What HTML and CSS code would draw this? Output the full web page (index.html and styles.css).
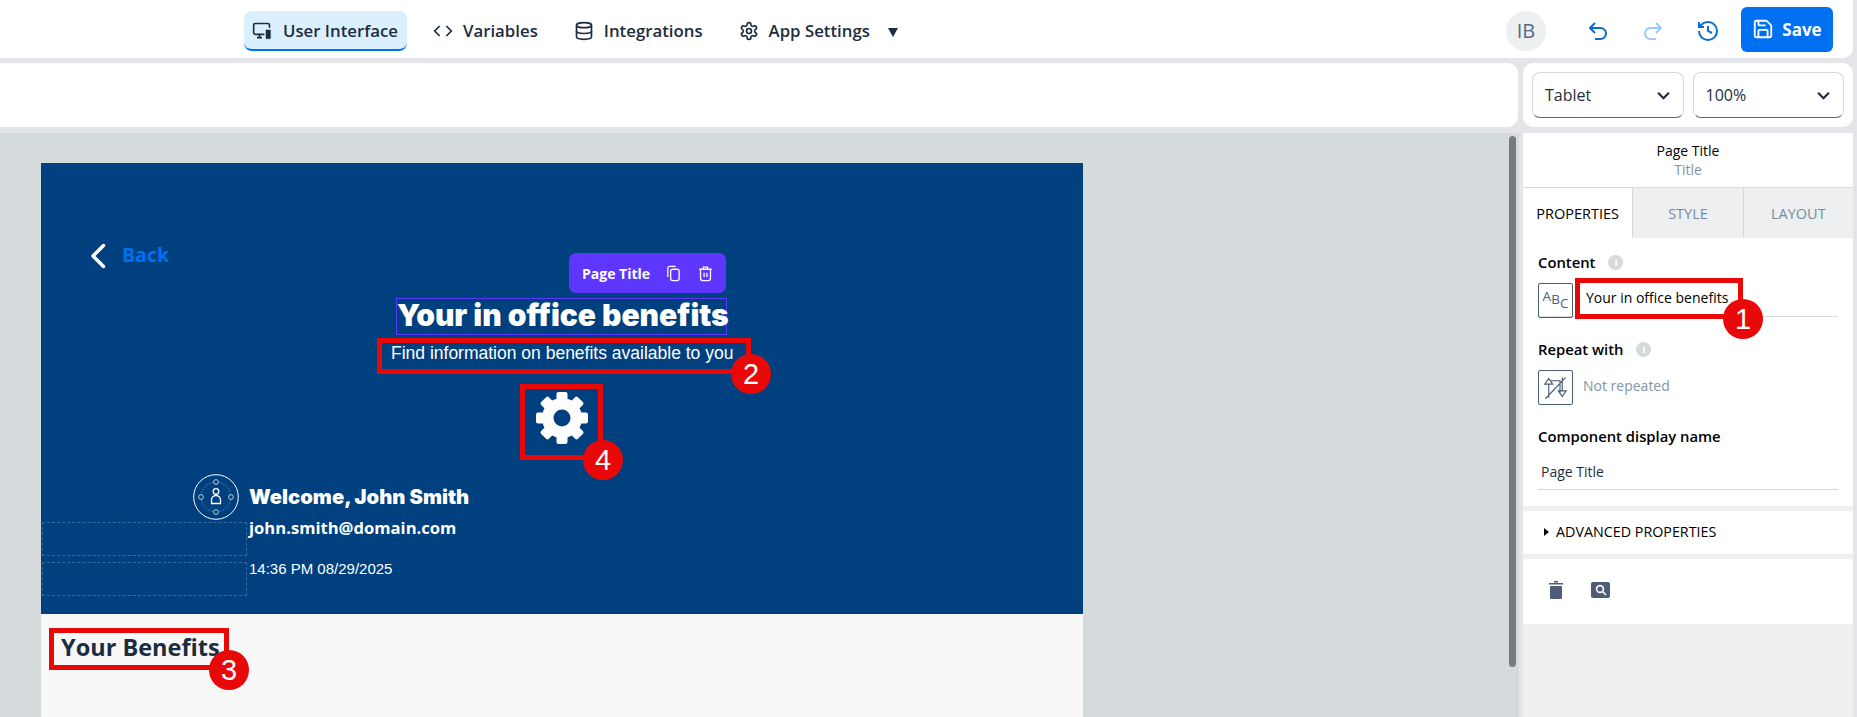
FILE: index.html
```html
<!DOCTYPE html>
<html lang="en">
<head>
  <meta charset="UTF-8">
  <title>User Interface</title>
  <link rel="stylesheet" href="styles.css">
</head>
<body>
  <header class="topbar">
    <nav class="nav">
      <a class="nav-item active">
        <svg class="nav-icon" viewBox="0 0 24 24"><path d="M15 16H4a2 2 0 0 1-2-2V5a2 2 0 0 1 2-2h15a2 2 0 0 1 2 2v3"/><path d="M9 16v4M6 20h6"/><rect class="solid" x="16" y="10" width="7" height="12" rx="1.5"/></svg>
        User Interface
      </a>
      <a class="nav-item">
        <svg class="nav-icon" viewBox="0 0 24 24"><path d="M8 6l-6 6 6 6M16 6l6 6-6 6"/></svg>
        Variables
      </a>
      <a class="nav-item">
        <svg class="nav-icon" viewBox="0 0 24 24"><ellipse cx="12" cy="5" rx="9" ry="3"/><path d="M3 5v14c0 1.7 4 3 9 3s9-1.3 9-3V5"/><path d="M3 12c0 1.7 4 3 9 3s9-1.3 9-3"/></svg>
        Integrations
      </a>
      <a class="nav-item">
        <svg class="nav-icon" viewBox="0 0 24 24"><path d="M12.22 2h-.44a2 2 0 0 0-2 2v.18a2 2 0 0 1-1 1.73l-.43.25a2 2 0 0 1-2 0l-.15-.08a2 2 0 0 0-2.73.73l-.22.38a2 2 0 0 0 .73 2.73l.15.1a2 2 0 0 1 1 1.72v.51a2 2 0 0 1-1 1.74l-.15.09a2 2 0 0 0-.73 2.73l.22.38a2 2 0 0 0 2.73.73l.15-.08a2 2 0 0 1 2 0l.43.25a2 2 0 0 1 1 1.73V20a2 2 0 0 0 2 2h.44a2 2 0 0 0 2-2v-.18a2 2 0 0 1 1-1.73l.43-.25a2 2 0 0 1 2 0l.15.08a2 2 0 0 0 2.73-.73l.22-.39a2 2 0 0 0-.73-2.73l-.15-.08a2 2 0 0 1-1-1.74v-.5a2 2 0 0 1 1-1.74l.15-.09a2 2 0 0 0 .73-2.73l-.22-.38a2 2 0 0 0-2.73-.73l-.15.08a2 2 0 0 1-2 0l-.43-.25a2 2 0 0 1-1-1.73V4a2 2 0 0 0-2-2z"/><circle cx="12" cy="12" r="3"/></svg>
        App Settings
        <span class="nav-caret"></span>
      </a>
    </nav>
    <div class="top-actions">
      <span class="avatar">IB</span>
      <svg class="action-icon" viewBox="0 0 24 24"><path d="M9 14 4 9l5-5"/><path d="M4 9h10.5a5.5 5.5 0 0 1 0 11H9"/></svg>
      <svg class="action-icon off" viewBox="0 0 24 24"><path d="M15 14l5-5-5-5"/><path d="M20 9H9.5a5.5 5.5 0 0 0 0 11H15"/></svg>
      <svg class="action-icon" viewBox="0 0 24 24"><path d="M3 12a9 9 0 1 0 9-9 9.75 9.75 0 0 0-6.74 2.74L3 8"/><path d="M3 3v5h5"/><path d="M12 7v5l4 2"/></svg>
      <button class="save-btn">
        <svg class="save-icon" viewBox="0 0 24 24"><path d="M15.2 3a2 2 0 0 1 1.4.6l3.8 3.8a2 2 0 0 1 .6 1.4V19a2 2 0 0 1-2 2H5a2 2 0 0 1-2-2V5a2 2 0 0 1 2-2z"/><path d="M17 21v-7a1 1 0 0 0-1-1H8a1 1 0 0 0-1 1v7"/><path d="M7 3v4a1 1 0 0 0 1 1h7"/></svg>
        Save
      </button>
    </div>
  </header>

  <div class="toolbar-row">
    <div class="toolbar"></div>
    <div class="view-controls">
      <div class="select">Tablet<svg class="chevron" viewBox="0 0 12 8"><path d="M1 1.5l5 5 5-5"/></svg></div>
      <div class="select">100%<svg class="chevron" viewBox="0 0 12 8"><path d="M1 1.5l5 5 5-5"/></svg></div>
    </div>
  </div>

  <div class="workspace">
    <main class="canvas">
      <div class="page">
        <section class="hero">
          <div class="back">
            <svg class="back-icon" viewBox="0 0 16 26"><path d="M13.5 2.5L3 13l10.5 10.5"/></svg>
            <span>Back</span>
          </div>

          <div class="title-box">
            <div class="title-tools">
              <span>Page Title</span>
              <svg viewBox="0 0 24 24"><rect x="8" y="6" width="12" height="16" rx="3"/><path d="M4 17V5a3 3 0 0 1 3-3h8"/></svg>
              <svg viewBox="0 0 24 24"><path d="M3 6h18M9 6V3h6v3"/><path d="M5 6v13a3 3 0 0 0 3 3h8a3 3 0 0 0 3-3V6"/><path d="M10 11v6M14 11v6"/></svg>
            </div>
            <h1 class="page-title">Your in office benefits</h1>
          </div>

          <div class="mark mark-subtitle">
            <p class="subtitle">Find information on benefits available to you</p>
            <span class="badge">2</span>
          </div>

          <div class="mark mark-gear">
            <svg class="hero-gear" viewBox="-27 -27 54 54">
              <circle r="20"/>
              <rect x="-5.5" y="-26" width="11" height="52" rx="2"/>
              <rect x="-5.5" y="-26" width="11" height="52" rx="2" transform="rotate(45)"/>
              <rect x="-5.5" y="-26" width="11" height="52" rx="2" transform="rotate(90)"/>
              <rect x="-5.5" y="-26" width="11" height="52" rx="2" transform="rotate(135)"/>
              <circle class="gear-hole" r="8.5"/>
            </svg>
            <span class="badge">4</span>
          </div>

          <div class="user-grid">
            <div class="user-pic">
              <svg viewBox="0 0 46 46">
                <circle class="ring" cx="23" cy="23" r="22.3"/>
                <circle class="ring-inner" cx="23" cy="23" r="15"/>
                <circle class="dot" cx="23" cy="8" r="2.4"/>
                <circle class="dot" cx="23" cy="38" r="2.4"/>
                <circle class="dot" cx="8" cy="23" r="2.4"/>
                <circle class="dot" cx="38" cy="23" r="2.4"/>
                <circle class="person" cx="23" cy="17.5" r="2.8"/>
                <path class="person" d="M18.5 29.5v-3.5a4.5 4.5 0 0 1 9 0v3.5z"/>
              </svg>
            </div>
            <div class="welcome">Welcome, John Smith</div>
            <div class="slot"></div>
            <div class="email">john.smith@domain.com</div>
            <div class="slot"></div>
            <div class="datetime">14:36 PM 08/29/2025</div>
          </div>
        </section>

        <section class="page-body">
          <div class="mark mark-benefits">
            <h2 class="benefits">Your Benefits</h2>
            <span class="badge">3</span>
          </div>
        </section>
      </div>
      <div class="scrollbar"></div>
    </main>

    <aside class="panel">
      <div class="panel-card">
        <div class="panel-head">
          <div class="panel-name">Page Title</div>
          <div class="panel-type">Title</div>
        </div>
        <div class="tabs">
          <div class="tab selected">PROPERTIES</div>
          <div class="tab">STYLE</div>
          <div class="tab">LAYOUT</div>
        </div>
        <div class="props">
          <div class="prop-label">Content <i class="info">i</i></div>
          <div class="prop-row underlined">
            <span class="prop-box abc"><b>A</b><b>B</b><b>C</b></span>
            <div class="mark mark-content">
              Your in office benefits
              <span class="badge">1</span>
            </div>
          </div>
          <div class="prop-label second">Repeat with <i class="info">i</i></div>
          <div class="prop-row">
            <span class="prop-box">
              <svg viewBox="0 0 24 24"><path d="M6 21V9M2.500 9L6 4l3.500 5zM18 3v12M14.500 15l3.500 5 3.500-5zM3 22L21 3M8 6h8v11"/></svg>
            </span>
            <span class="muted">Not repeated</span>
          </div>
          <div class="prop-label third">Component display name</div>
          <div class="name-input">Page Title</div>
        </div>
      </div>

      <div class="panel-card advanced"><span class="adv-arrow"></span>ADVANCED PROPERTIES</div>

      <div class="panel-card panel-actions">
        <svg class="trash" viewBox="0 0 14 18"><path d="M0 2h14v1.6H0zM5 0h4v1.4H5zM1 5h12v11.5a1.5 1.5 0 0 1-1.5 1.5h-9A1.5 1.5 0 0 1 1 16.500z"/></svg>
        <svg class="lookup" viewBox="0 0 19 16"><rect width="19" height="16" rx="2"/><circle class="lens" cx="9" cy="7" r="3.4"/><path class="lens" d="M11.500 9.500L15 13"/></svg>
      </div>
    </aside>
  </div>
</body>
</html>
```

FILE: styles.css
```css
* {
  margin: 0;
  padding: 0;
  box-sizing: border-box;
}

html, body {
  height: 717px;
  overflow: hidden;
}

body {
  background: #e3e5e9;
  font-family: "Open Sans", "Liberation Sans", sans-serif;
  color: #1d2d3e;
}

/* top bar */
.topbar {
  height: 58px;
  margin-right: 4px;
  background: #fff;
  border-bottom-right-radius: 10px;
  display: flex;
  align-items: center;
  justify-content: space-between;
}

.nav {
  display: flex;
  align-items: center;
  margin-left: 244px;
  margin-top: 3px;
}

.nav-item {
  height: 40px;
  padding: 0 9px;
  margin-right: 18px;
  display: flex;
  align-items: center;
  gap: 10px;
  font-size: 16.800px;
  font-weight: 600;
  border-radius: 8px;
  white-space: nowrap;
}

.nav-item.active {
  width: 163px;
  margin-right: 17px;
  padding-left: 8px;
  gap: 11px;
  background: #dbf0fe;
  border-bottom: 2px solid #0070f2;
  padding-top: 2px;
}

.nav-icon {
  width: 20px;
  height: 20px;
  fill: none;
  stroke: #1d2d3e;
  stroke-width: 2;
}

.nav-icon .solid {
  fill: #1d2d3e;
  stroke: #dbf0fe;
  stroke-width: 1;
}

.nav-caret {
  margin: 3px 0 0 8px;
  border-left: 5.5px solid transparent;
  border-right: 5.5px solid transparent;
  border-top: 9px solid #1d2d3e;
}

.top-actions {
  display: flex;
  align-items: center;
  margin-right: 20px;
  padding-top: 3px;
}

.avatar {
  width: 40px;
  height: 40px;
  border-radius: 50%;
  background: #edeff1;
  color: #556b82;
  font-size: 20px;
  display: flex;
  align-items: center;
  justify-content: center;
  margin-right: 40px;
}

.action-icon {
  width: 24px;
  height: 24px;
  margin-right: 31px;
  fill: none;
  stroke: #0a6ed1;
  stroke-width: 2;
}

.action-icon.off {
  stroke: #9dc8f7;
}

.action-icon:nth-of-type(3) {
  margin-right: 21px;
}

.save-btn {
  width: 92px;
  height: 45px;
  border: none;
  border-radius: 6px;
  background: #0070f2;
  color: #fff;
  font: 700 17px "Open Sans", sans-serif;
  display: flex;
  align-items: center;
  justify-content: center;
  gap: 8px;
  margin-top: -3px;
}

.save-icon {
  width: 22px;
  height: 22px;
  fill: none;
  stroke: #fff;
  stroke-width: 2;
}

/* second row */
.toolbar-row {
  height: 64px;
  margin-top: 5px;
  display: flex;
  gap: 5px;
  padding-right: 4px;
}

.toolbar {
  width: 1518px;
  background: #fff;
  border-bottom-right-radius: 10px;
  border-top-right-radius: 10px;
}

.view-controls {
  flex: 1;
  background: #fff;
  border-radius: 10px;
  display: flex;
  gap: 9px;
  padding: 9px;
}

.select {
  flex: 1;
  height: 46px;
  border: 1px solid #d5dadd;
  border-bottom: 1px solid #556b82;
  border-radius: 8px;
  padding: 0 13px 0 12px;
  display: flex;
  align-items: center;
  justify-content: space-between;
  font-size: 16px;
}

.chevron {
  width: 13px;
  height: 9px;
  fill: none;
  stroke: #1d2d3e;
  stroke-width: 2;
}

/* canvas */
.workspace {
  height: 590px;
  margin-top: 6px;
  display: flex;
  gap: 4px;
  padding-right: 4px;
}

.canvas {
  position: relative;
  width: 1519px;
  background: #d5dadd;
  padding: 30px 0 0 41px;
  overflow: hidden;
}

.page {
  width: 1042px;
  height: 560px;
  background: #f8f8f8;
}

.scrollbar {
  position: absolute;
  top: 3px;
  right: 3px;
  width: 7px;
  height: 531px;
  border-radius: 4px;
  background: #777b7e;
}

.hero {
  height: 451px;
  background: #00407f;
  color: #fff;
  padding-top: 80px;
  display: flex;
  flex-direction: column;
  align-items: center;
}

.back {
  align-self: flex-start;
  margin-left: 49px;
  height: 26px;
  display: flex;
  align-items: center;
  gap: 16px;
  color: #0070f2;
  font-size: 19.500px;
  font-weight: 700;
}

.back span {
  margin-top: -3px;
}

.back-icon {
  width: 16px;
  height: 26px;
  margin-top: -1px;
  fill: none;
  stroke: #fff;
  stroke-width: 3.500;
  stroke-linecap: round;
  stroke-linejoin: round;
}

.title-box {
  position: relative;
  width: 331px;
  height: 37px;
  margin-top: 29px;
  margin-left: -1px;
  border: 1px solid #5d36ff;
}

.title-tools {
  position: absolute;
  right: 0;
  top: -46px;
  width: 157px;
  height: 40px;
  border-radius: 7px;
  background: #5d36ff;
  display: flex;
  align-items: center;
  padding-left: 13px;
  gap: 15px;
  font-size: 14px;
  font-weight: 700;
}

.title-tools svg {
  width: 17px;
  height: 17px;
  fill: none;
  stroke: #fff;
  stroke-width: 1.800;
}

.page-title {
  font-family: Inter, "Open Sans", sans-serif;
  font-size: 30px;
  font-weight: 900;
  line-height: 33px;
  text-align: center;
  white-space: nowrap;
}

.mark {
  position: relative;
  border: 5px solid #e80808;
}

.badge {
  position: absolute;
  right: -25px;
  bottom: -25px;
  width: 40px;
  height: 40px;
  border-radius: 50%;
  background: #e80808;
  color: #fff;
  font: 400 29px/40px "Liberation Sans", sans-serif;
  text-align: center;
  z-index: 2;
}

.mark-subtitle {
  width: 374px;
  height: 36px;
  margin-top: 3px;
  margin-left: 4px;
  padding-left: 9px;
}

.subtitle {
  font: 400 17.500px/20px "Liberation Sans", sans-serif;
  white-space: nowrap;
}

.mark-gear {
  width: 83px;
  height: 76px;
  margin-top: 10px;
  margin-left: -1px;
  display: flex;
  justify-content: center;
  padding-top: 2px;
}

.hero-gear {
  width: 54px;
  height: 54px;
  fill: #fff;
}

.gear-hole {
  fill: #00407f;
}

.user-grid {
  align-self: flex-start;
  margin-top: 14px;
  margin-left: 1px;
  display: grid;
  grid-template-columns: 205px 1fr;
  grid-template-rows: 48px 34px 34px;
  column-gap: 2px;
}

.user-pic {
  display: flex;
  justify-content: flex-end;
  padding-right: 8px;
}

.user-pic svg {
  width: 46px;
  height: 46px;
}

.ring, .dot, .person {
  fill: none;
  stroke: #fff;
}

.ring {
  stroke-width: 1;
}

.ring-inner {
  fill: none;
  stroke: #fff;
  stroke-opacity: .45;
  stroke-width: .7;
  stroke-dasharray: 1.500 1.500;
}

.dot {
  fill: #00407f;
  stroke-width: .7;
}

.person {
  stroke-width: 1.300;
}

.welcome {
  font-family: Inter, "Open Sans", sans-serif;
  font-size: 20.200px;
  font-weight: 900;
  line-height: 46px;
}

.email {
  font-size: 16.600px;
  font-weight: 700;
  line-height: 22px;
  margin-top: -5px;
}

.datetime {
  font: 400 15px/20px "Liberation Sans", sans-serif;
  margin-top: 3px;
}

.slot {
  border: 1px dashed rgba(255, 255, 255, .22);
}

.slot:nth-of-type(5) {
  margin-top: 6px;
  height: 34px;
}

.page-body {
  padding: 14px 0 0 8px;
}

.mark-benefits {
  width: 180px;
  height: 42px;
  padding-left: 7px;
}

.benefits {
  font-size: 23.500px;
  font-weight: 700;
  line-height: 29px;
  white-space: nowrap;
}

/* properties panel */
.panel {
  flex: 1;
  background: #edeff1;
}

.panel-card {
  background: #fff;
  margin-bottom: 5px;
}

.panel-head {
  height: 55px;
  padding-top: 8px;
  text-align: center;
  border-bottom: 1px solid #d5dadd;
}

.panel-name {
  font-size: 14px;
  line-height: 20px;
  color: #000;
}

.panel-type {
  font-size: 14px;
  line-height: 18px;
  color: #8396a8;
}

.tabs {
  height: 50px;
  display: flex;
}

.tab {
  flex: 1;
  background: #edeff1;
  color: #758ca4;
  font-size: 14.500px;
  display: flex;
  align-items: center;
  justify-content: center;
}

.tab + .tab {
  border-left: 1px solid #d5dadd;
}

.tab.selected {
  background: #fff;
  color: #000;
}

.props {
  height: 268px;
  padding: 14px 15px 0;
}

.prop-label {
  height: 20px;
  display: flex;
  align-items: center;
  gap: 13px;
  font-size: 14.800px;
  font-weight: 600;
  color: #000;
}

.prop-label.second {
  margin-top: 22px;
}

.prop-label.third {
  margin-top: 21px;
}

.info {
  width: 15px;
  height: 15px;
  border-radius: 50%;
  background: #d5dadd;
  color: #fff;
  font: 700 11px/15px "Liberation Serif", serif;
  text-align: center;
}

.prop-row {
  height: 35px;
  margin-top: 11px;
  display: flex;
  align-items: center;
  gap: 10px;
}

.prop-row.underlined {
  border-bottom: 1px solid #d5dadd;
  height: 34px;
  align-items: flex-start;
}

.prop-box {
  flex: none;
  width: 35px;
  height: 35px;
  border: 1px solid #475e75;
  border-radius: 2px;
  display: flex;
  align-items: center;
  justify-content: center;
}

.prop-box svg {
  width: 27px;
  height: 27px;
  fill: none;
  stroke: #475e75;
  stroke-width: 1;
}

.abc b {
  font-weight: 400;
  font-size: 13.500px;
  color: #475e75;
  line-height: 1;
}

.abc b:nth-child(1) {
  margin-top: -7px;
}

.abc b:nth-child(2) {
  margin-top: -1px;
}

.abc b:nth-child(3) {
  margin-top: 7px;
}

.mark-content {
  width: 168px;
  height: 41px;
  margin-top: -5px;
  margin-left: -8px;
  padding-left: 6px;
  font-size: 14px;
  line-height: 30px;
  color: #000;
  white-space: nowrap;
}

.muted {
  color: #8396a8;
  font-size: 14px;
  margin-top: -5px;
}

.name-input {
  height: 29px;
  margin-top: 15px;
  padding: 0 3px;
  border-bottom: 1px solid #d5dadd;
  font-size: 14px;
  line-height: 21px;
  color: #1d2d3e;
}

.advanced {
  height: 43px;
  padding: 0 0 2px 21px;
  display: flex;
  align-items: center;
  gap: 7px;
  font-size: 14.300px;
  color: #000;
}

.adv-arrow {
  border-top: 4.500px solid transparent;
  border-bottom: 4.500px solid transparent;
  border-left: 5px solid #000;
}

.panel-actions {
  height: 65px;
  padding: 0 0 3px 26px;
  display: flex;
  align-items: center;
  gap: 28px;
  border-radius: 2px;
}

.trash {
  width: 14px;
  height: 18px;
  fill: #4f5d78;
}

.lookup {
  width: 19px;
  height: 16px;
  fill: #4f5d78;
}

.lens {
  fill: none;
  stroke: #fff;
  stroke-width: 1.600;
}
```
